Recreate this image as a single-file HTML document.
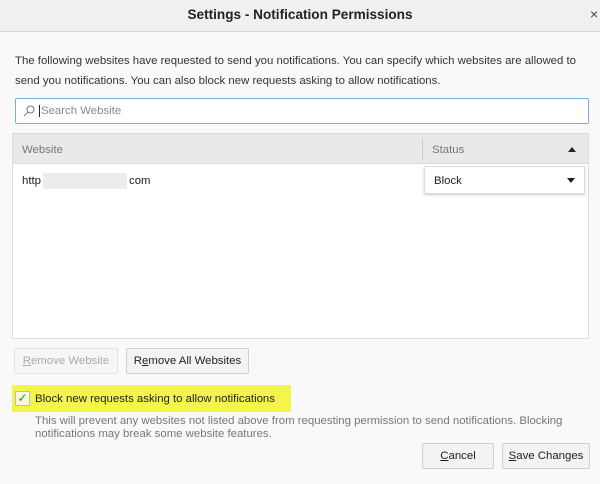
<!DOCTYPE html>
<html><head><style>
*{box-sizing:border-box;margin:0;padding:0}
body{width:600px;height:484px;background:#f9f9fa;font-family:"Liberation Sans",sans-serif;font-size:11.4px;color:#222;position:relative;overflow:hidden}
.a{position:absolute}
.title{left:0;top:0;width:600px;height:32px;background:#f0f0f0;border-bottom:1px solid #d8d8d8;text-align:center;line-height:30px;font-size:13.6px;color:#222;font-weight:bold}
.btn{background:#f3f3f3;border:1px solid #d0d0d0;border-radius:2px;text-align:center;line-height:24px}
</style></head><body>
<div class="a title">Settings - Notification Permissions</div>
<div class="a" style="left:590px;top:6px;color:#444;font-size:14px">×</div>
<div class="a" style="left:15px;top:51px;width:580px;line-height:20px;color:#333">The following websites have requested to send you notifications. You can specify which websites are allowed to send you notifications. You can also block new requests asking to allow notifications.</div>
<div class="a" style="left:15px;top:98px;width:574px;height:26px;background:#fff;border:1px solid #7aaee0;border-radius:2px"></div>
<svg class="a" style="left:22px;top:104px" width="14" height="14"><circle cx="8.5" cy="5.5" r="3.5" fill="none" stroke="#777" stroke-width="1"/><line x1="6" y1="8" x2="2" y2="12" stroke="#777"/></svg>
<div class="a" style="left:39px;top:104px;color:#888;line-height:14px"><span style="border-left:1px solid #222;margin-right:1px"></span>Search Website</div>
<div class="a" style="left:12px;top:133px;width:577px;height:206px;background:#fff;border:1px solid #ddd"></div>
<div class="a" style="left:13px;top:134px;width:575px;height:30px;background:#e9e9e9;border-bottom:1px solid #ddd"></div>
<div class="a" style="left:22px;top:144px;color:#777">Website</div>
<div class="a" style="left:422px;top:138px;width:1px;height:22px;background:#ccc"></div>
<div class="a" style="left:432px;top:144px;color:#777">Status</div>
<div class="a" style="left:568px;top:147px;width:0;height:0;border-left:4px solid transparent;border-right:4px solid transparent;border-bottom:5px solid #222"></div>
<div class="a" style="left:22px;top:175px">http</div>
<div class="a" style="left:43px;top:173px;width:84px;height:16px;background:#ececec"></div>
<div class="a" style="left:129px;top:175px">com</div>
<div class="a" style="left:424px;top:166px;width:161px;height:28px;background:#fff;border:1px solid #ddd;box-shadow:0 1px 2px #ccc"></div>
<div class="a" style="left:434px;top:175px">Block</div>
<div class="a" style="left:567px;top:178px;width:0;height:0;border-left:4px solid transparent;border-right:4px solid transparent;border-top:5px solid #222"></div>
<div class="a btn" style="left:14px;top:348px;width:104px;height:26px;color:#aaa;background:#f6f6f6;border-color:#e3e3e3"><u>R</u>emove Website</div>
<div class="a btn" style="left:126px;top:348px;width:123px;height:26px">R<u>e</u>move All Websites</div>
<div class="a" style="left:12px;top:385px;width:279px;height:27px;background:#f4f44a"></div>
<div class="a" style="left:15px;top:391px;width:15px;height:15px;background:#fafae0;border:1px solid #bbb;color:#1a9a1a;font-size:12px;line-height:13px;text-align:center">✓</div>
<div class="a" style="left:35px;top:393px;color:#222">Block new requests asking to allow notifications</div>
<div class="a" style="left:35px;top:415px;width:560px;line-height:13px;color:#777">This will prevent any websites not listed above from requesting permission to send notifications. Blocking notifications may break some website features.</div>
<div class="a btn" style="left:422px;top:443px;width:72px;height:26px"><u>C</u>ancel</div>
<div class="a btn" style="left:502px;top:443px;width:88px;height:26px"><u>S</u>ave Changes</div>
</body></html>
